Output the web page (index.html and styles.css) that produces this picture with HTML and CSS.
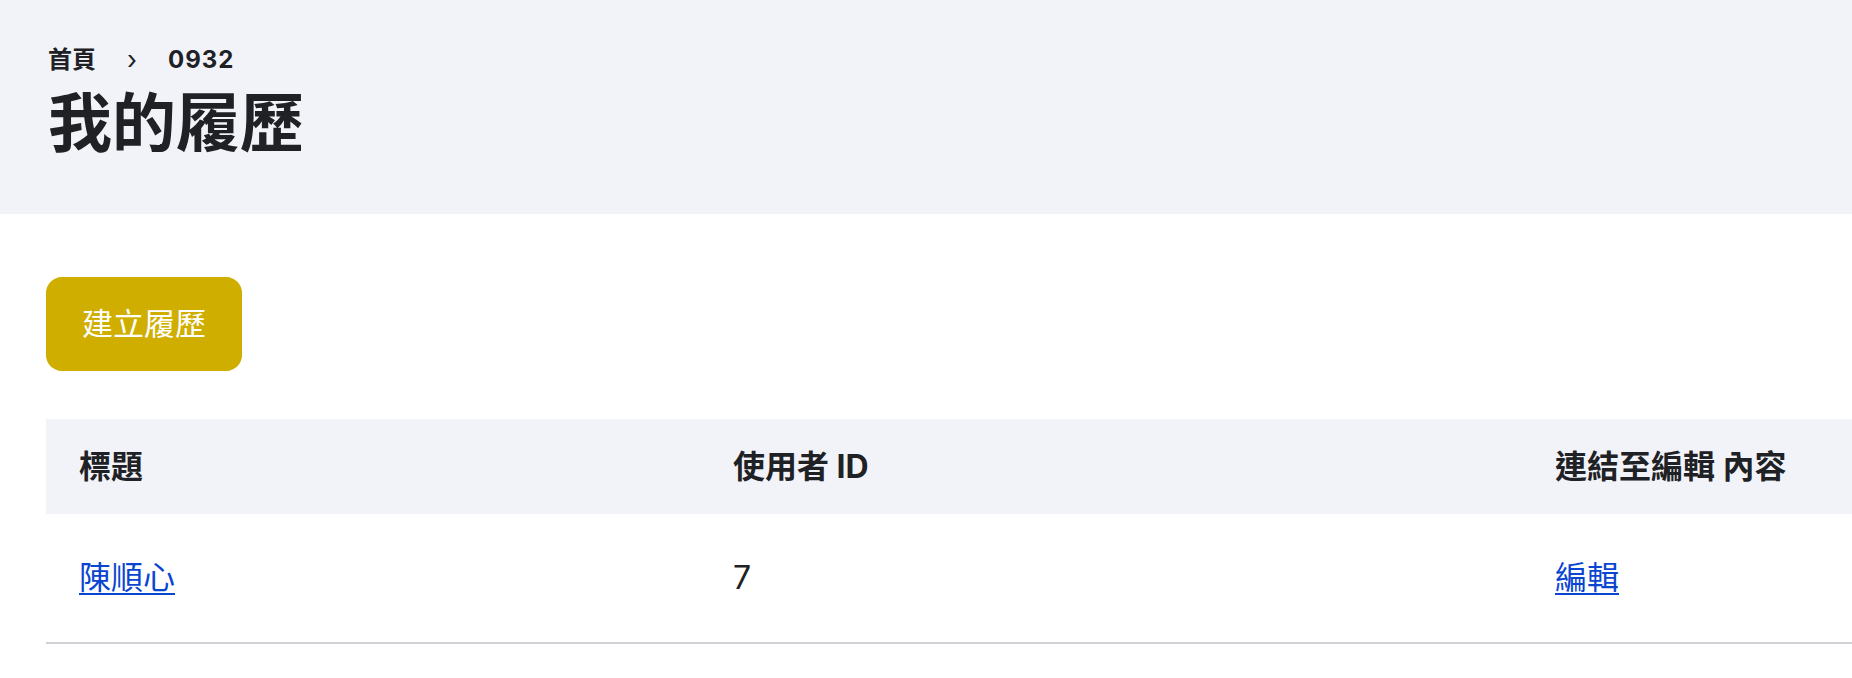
FILE: index.html
```html
<!DOCTYPE html>
<html lang="zh-TW">
<head>
    <meta charset="utf-8">
    <title>我的履歷</title>
    <link rel="stylesheet" href="styles.css">
</head>
<body>
<!-- header -->
<div class="page-head">
    <div class="crumbs">
        <a href="#" class="crumb">首頁</a>
        <span class="sep">›</span>
        <span class="crumb current">0932</span>
    </div>
    <h1 class="page-title">我的履歷</h1>
</div>
<div class="page-body">
    <div class="actions">
        <a href="#" class="btn btn-primary">建立履歷</a>
    </div>
    <table class="list-table">
        <colgroup>
            <col class="col-title">
            <col class="col-user">
            <col class="col-edit">
        </colgroup>
        <thead>
            <tr>
                <th>標題</th>
                <th>使用者 ID</th>
                <th>連結至編輯 內容</th>
            </tr>
        </thead>
        <tbody>
            <tr>
                <td><a href="#" class="link">陳順心</a></td>
                <td>7</td>
                <td><a href="#" class="link">編輯</a></td>
            </tr>
        </tbody>
    </table>
</div>
</body>
</html>
```

FILE: styles.css
```css
html,body{margin:0;padding:0;}
body{background:#fff;color:#202125;font-family:"Inter","Noto Sans CJK TC",sans-serif;overflow:hidden;}
a{color:inherit;text-decoration:none;}

.page-head{background:#f2f3f8;padding:42px 48px 53px;}
.page-head .crumbs{display:flex;align-items:center;gap:31px;font-size:24px;line-height:36px;font-weight:700;}
.page-head .crumbs .sep{font-weight:400;font-size:26px;}
.page-head .crumbs .current{letter-spacing:1px;}
.page-head .page-title{margin:6px 0 0;font-size:64px;line-height:77px;font-weight:700;}

.page-body{padding:63px 0 0 46px;}
.actions{margin-bottom:48px;}
.btn{display:inline-block;font-size:31px;line-height:44px;padding:25px 36px;border-radius:16px;}
.btn-primary{background:#cfae00;color:#fff;}

.list-table{width:100%;border-collapse:collapse;table-layout:fixed;font-size:32px;}
.list-table .col-title{width:654px;}
.list-table .col-user{width:822px;}
.list-table th{background:#f2f3f8;text-align:left;font-weight:700;line-height:47px;padding:24px 33px;white-space:nowrap;}
.list-table td{line-height:48px;padding:40px 33px;border-bottom:2px solid #d0d0d5;white-space:nowrap;}
.list-table .link{color:#0a45d1;text-decoration:underline;text-underline-offset:4px;text-decoration-thickness:2px;}
```
